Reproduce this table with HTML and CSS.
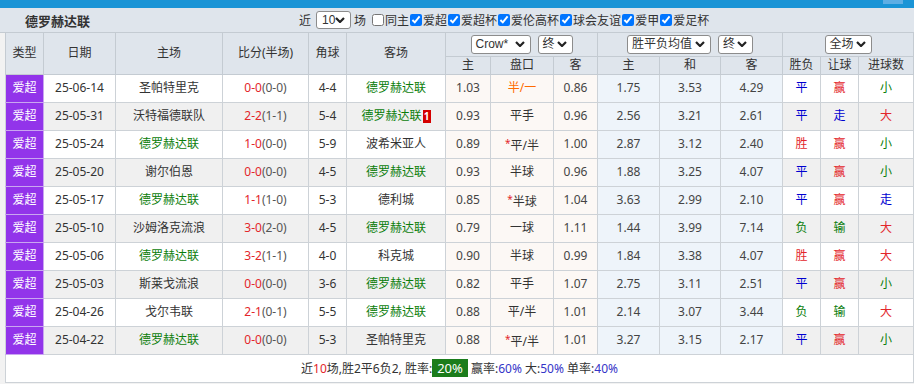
FILE: index.html
```html
<!DOCTYPE html>
<html lang="zh-CN">
  <head>
    <meta charset="UTF-8" />
    <meta name="viewport" content="width=device-width, initial-scale=1.0" />
    <title>德罗赫达联 - 近期战绩</title>
    <link rel="stylesheet" href="styles.css">
  </head>
  <body>
    <div class="topbar"><span class="topbar-btn"></span></div>

    <div class="panel-head">
      <h2 class="team-title">德罗赫达联</h2>
      <div class="filters">
        <span class="filter-word">近</span>
        <span class="sel sel-num">10<svg class="chev" viewBox="0 0 10 6" width="10" height="6"><path d="M1 1l4 4 4-4" fill="none" stroke="#222" stroke-width="2.2"/></svg></span>
        <span class="filter-word">场</span>
        <label><input type="checkbox" />同主</label><label><input type="checkbox" checked />爱超</label><label><input type="checkbox" checked />爱超杯</label><label><input type="checkbox" checked />爱伦高杯</label><label><input type="checkbox" checked />球会友谊</label><label><input type="checkbox" checked />爱甲</label><label><input type="checkbox" checked />爱足杯</label>
      </div>
    </div>

    <table class="record">
      <colgroup>
        <col style="width:38px" /><col style="width:72px" /><col style="width:107px" />
        <col style="width:86px" /><col style="width:38px" /><col style="width:99px" />
        <col style="width:45px" /><col style="width:63px" /><col style="width:44px" />
        <col style="width:62px" /><col style="width:61px" /><col style="width:62px" />
        <col style="width:38px" /><col style="width:38px" /><col style="width:55px" />
      </colgroup>
      <thead>
        <tr class="head-top">
          <th rowspan="2">类型</th>
          <th rowspan="2">日期</th>
          <th rowspan="2">主场</th>
          <th rowspan="2">比分(半场)</th>
          <th rowspan="2">角球</th>
          <th rowspan="2">客场</th>
          <th colspan="3">
            <div class="sel-group">
              <span class="sel sel-crow">Crow*<svg class="chev" viewBox="0 0 10 6" width="10" height="6"><path d="M1 1l4 4 4-4" fill="none" stroke="#222" stroke-width="2.2"/></svg></span>
              <span class="sel sel-end">终<svg class="chev" viewBox="0 0 10 6" width="10" height="6"><path d="M1 1l4 4 4-4" fill="none" stroke="#222" stroke-width="2.2"/></svg></span>
            </div>
          </th>
          <th colspan="3">
            <div class="sel-group">
              <span class="sel sel-avg">胜平负均值<svg class="chev" viewBox="0 0 10 6" width="10" height="6"><path d="M1 1l4 4 4-4" fill="none" stroke="#222" stroke-width="2.2"/></svg></span>
              <span class="sel sel-end">终<svg class="chev" viewBox="0 0 10 6" width="10" height="6"><path d="M1 1l4 4 4-4" fill="none" stroke="#222" stroke-width="2.2"/></svg></span>
            </div>
          </th>
          <th colspan="3">
            <div class="sel-group">
              <span class="sel sel-full">全场<svg class="chev" viewBox="0 0 10 6" width="10" height="6"><path d="M1 1l4 4 4-4" fill="none" stroke="#222" stroke-width="2.2"/></svg></span>
            </div>
          </th>
        </tr>
        <tr class="head-sub">
          <th>主</th><th>盘口</th><th>客</th>
          <th>主</th><th>和</th><th>客</th>
          <th>胜负</th><th>让球</th><th>进球数</th>
        </tr>
      </thead>
      <tbody id="rows"></tbody>
      <tfoot>
        <tr class="summary">
          <td colspan="15">
            近<span class="red">10</span>场,胜2平6负2, 胜率:<span class="rate">20%</span> 赢率:<span class="blue-num">60%</span> 大:<span class="blue-num">50%</span> 单率:<span class="blue-num">40%</span>
          </td>
        </tr>
      </tfoot>
    </table>

    <script>
      // 近期比赛数据
      var DRG = '德罗赫达联'
      var matches = [
        ['25-06-14', '圣帕特里克', '0-0', '0-0', '4-4', DRG, '1.03', '半/一', '0.86', '1.75', '3.53', '4.29', '平', '赢', '小'],
        ['25-05-31', '沃特福德联队', '2-2', '1-1', '5-4', DRG, '0.93', '平手', '0.96', '2.56', '3.21', '2.61', '平', '走', '大'],
        ['25-05-24', DRG, '1-0', '0-0', '5-9', '波希米亚人', '0.89', '*平/半', '1.00', '2.87', '3.12', '2.40', '胜', '赢', '小'],
        ['25-05-20', '谢尔伯恩', '0-0', '0-0', '4-5', DRG, '0.93', '半球', '0.96', '1.88', '3.25', '4.07', '平', '赢', '小'],
        ['25-05-17', DRG, '1-1', '1-0', '5-3', '德利城', '0.85', '*半球', '1.04', '3.63', '2.99', '2.10', '平', '赢', '走'],
        ['25-05-10', '沙姆洛克流浪', '3-0', '2-0', '4-5', DRG, '0.79', '一球', '1.11', '1.44', '3.99', '7.14', '负', '输', '大'],
        ['25-05-06', DRG, '3-2', '1-1', '4-0', '科克城', '0.90', '半球', '0.99', '1.84', '3.38', '4.07', '胜', '赢', '大'],
        ['25-05-03', '斯莱戈流浪', '0-0', '0-0', '3-6', DRG, '0.82', '平手', '1.07', '2.75', '3.11', '2.51', '平', '赢', '小'],
        ['25-04-26', '戈尔韦联', '2-1', '0-1', '5-5', DRG, '0.88', '平/半', '1.01', '2.14', '3.07', '3.44', '负', '输', '大'],
        ['25-04-22', DRG, '0-0', '0-0', '5-3', '圣帕特里克', '0.88', '*平/半', '1.01', '3.27', '3.15', '2.17', '平', '赢', '小']
      ]

      var resultClass = {
        '胜': 'red', '赢': 'red', '大': 'red',
        '平': 'blue', '走': 'blue',
        '负': 'green', '输': 'green', '小': 'green'
      }

      function teamCell(name, idx, isAway) {
        var cls = name === DRG ? ' class="green"' : ''
        var card = idx === 1 && isAway ? '<span class="red-card">1</span>' : ''
        return '<td><span' + cls + '>' + name + '</span>' + card + '</td>'
      }

      function handicapCell(text, idx) {
        var star = ''
        if (text.charAt(0) === '*') {
          star = '<span class="star">*</span>'
          text = text.slice(1)
        }
        var cls = idx === 0 ? 'odds-a orange' : 'odds-a'
        return '<td class="' + cls + '">' + star + text + '</td>'
      }

      var html = ''
      matches.forEach(function (m, i) {
        html += '<tr>'
        html += '<td class="type">爱超</td>'
        html += '<td>' + m[0] + '</td>'
        html += teamCell(m[1], i, false)
        html += '<td class="score"><span class="red">' + m[2] + '</span>(' + m[3] + ')</td>'
        html += '<td>' + m[4] + '</td>'
        html += teamCell(m[5], i, true)
        html += '<td class="odds-a num">' + m[6] + '</td>'
        html += handicapCell(m[7], i)
        html += '<td class="odds-a num">' + m[8] + '</td>'
        html += '<td class="odds-b num">' + m[9] + '</td>'
        html += '<td class="odds-b num">' + m[10] + '</td>'
        html += '<td class="odds-b num">' + m[11] + '</td>'
        html += '<td class="' + resultClass[m[12]] + '">' + m[12] + '</td>'
        html += '<td class="' + resultClass[m[13]] + '">' + m[13] + '</td>'
        html += '<td class="' + resultClass[m[14]] + '">' + m[14] + '</td>'
        html += '</tr>'
      })
      document.getElementById('rows').innerHTML = html
    </script>
  </body>
</html>
```

FILE: styles.css
```css
* {
  margin: 0;
  padding: 0;
  box-sizing: border-box;
}

body {
  background-color: #f2f2f2;
  color: #333;
  font-family: "Noto Sans", "Noto Sans CJK SC", sans-serif;
  font-size: 12px;
}

.topbar {
  position: relative;
  height: 8px;
  background-color: #1a94d6;
}

.topbar-btn {
  position: absolute;
  right: 11px;
  top: 0;
  width: 20px;
  height: 4px;
  background-color: #5eaee4;
}

.panel-head {
  display: flex;
  align-items: center;
  height: 25px;
  padding-left: 25px;
  background-color: #dfe5ec;
  border-bottom: 1px solid #c4cbd2;
}

.team-title {
  font-size: 13px;
  font-weight: bold;
  color: #333;
}

.filters {
  display: flex;
  align-items: center;
  margin-left: 206px;
  font-size: 12px;
  color: #333;
}

.filter-word {
  margin: 0 5px 0 3px;
}

.filters label {
  display: flex;
  align-items: center;
}

.filters input {
  width: 12px;
  height: 12px;
  margin: 0 1px 0 1px;
}

.sel {
  display: inline-flex;
  align-items: center;
  justify-content: space-between;
  height: 19px;
  padding: 0 5px 0 4px;
  background-color: #fff;
  border: 1px solid #8c8c8c;
  border-radius: 3px;
  font-family: "Liberation Sans", "Noto Sans CJK SC", sans-serif;
  font-size: 12px;
  color: #333;
}

.sel-num {
  width: 35px;
  height: 18px;
  padding-left: 5px;
}

.sel-crow {
  width: 60px;
}

.sel-end {
  width: 35px;
}

.sel-avg {
  width: 84px;
}

.sel-full {
  width: 47px;
}

.chev {
  flex-shrink: 0;
}

.sel-group {
  display: flex;
  justify-content: center;
  align-items: center;
  gap: 7px;
}

.record {
  width: 908px;
  margin-left: 5px;
  table-layout: fixed;
  border-collapse: collapse;
  background-color: #fff;
}

.record th,
.record td {
  border: 1px solid #cdd2d7;
  text-align: center;
  font-weight: normal;
  line-height: 16px;
  white-space: nowrap;
  overflow: hidden;
}

.record thead th {
  background-color: #dfe5ec;
  color: #333;
  border-color: #c4cbd2;
}

.record thead tr:first-child th {
  border-top: none;
}

.head-top {
  height: 23px;
}

.head-sub {
  height: 18px;
}

.record tbody tr {
  height: 28px;
}

.record tbody tr:nth-child(even) td {
  background-color: #f0f0f0;
}

.record tbody tr td.type {
  background-color: #9234ea;
  color: #fff;
  border-color: #c9a6f0;
  border-left-color: #cdd2d7;
}

.record tbody tr td.odds-a {
  background-color: #fcf8f5;
}

.record tbody tr td.odds-b {
  background-color: #eef4fa;
}

.num {
  color: #444;
}

.score {
  color: #555;
}

.red {
  color: #e3262b;
}

.green {
  color: #0a7d0a;
}

.blue {
  color: #0000d0;
}

.orange {
  color: #ff6a00;
}

.star {
  color: #e3262b;
  font-size: 10px;
  vertical-align: 3px;
}

.red-card {
  display: inline-block;
  width: 8px;
  margin-left: 1px;
  background-color: #d40000;
  color: #fff;
  font-size: 10px;
  font-weight: bold;
  line-height: 13px;
  text-align: center;
  vertical-align: 0;
}

.summary td {
  height: 28px;
  background-color: #fff;
  color: #333;
}

.rate {
  display: inline-block;
  padding: 0 5px;
  background-color: #1b7c1b;
  color: #fff;
  font-size: 13px;
  line-height: 18px;
}

.blue-num {
  color: #3434c8;
}
```
